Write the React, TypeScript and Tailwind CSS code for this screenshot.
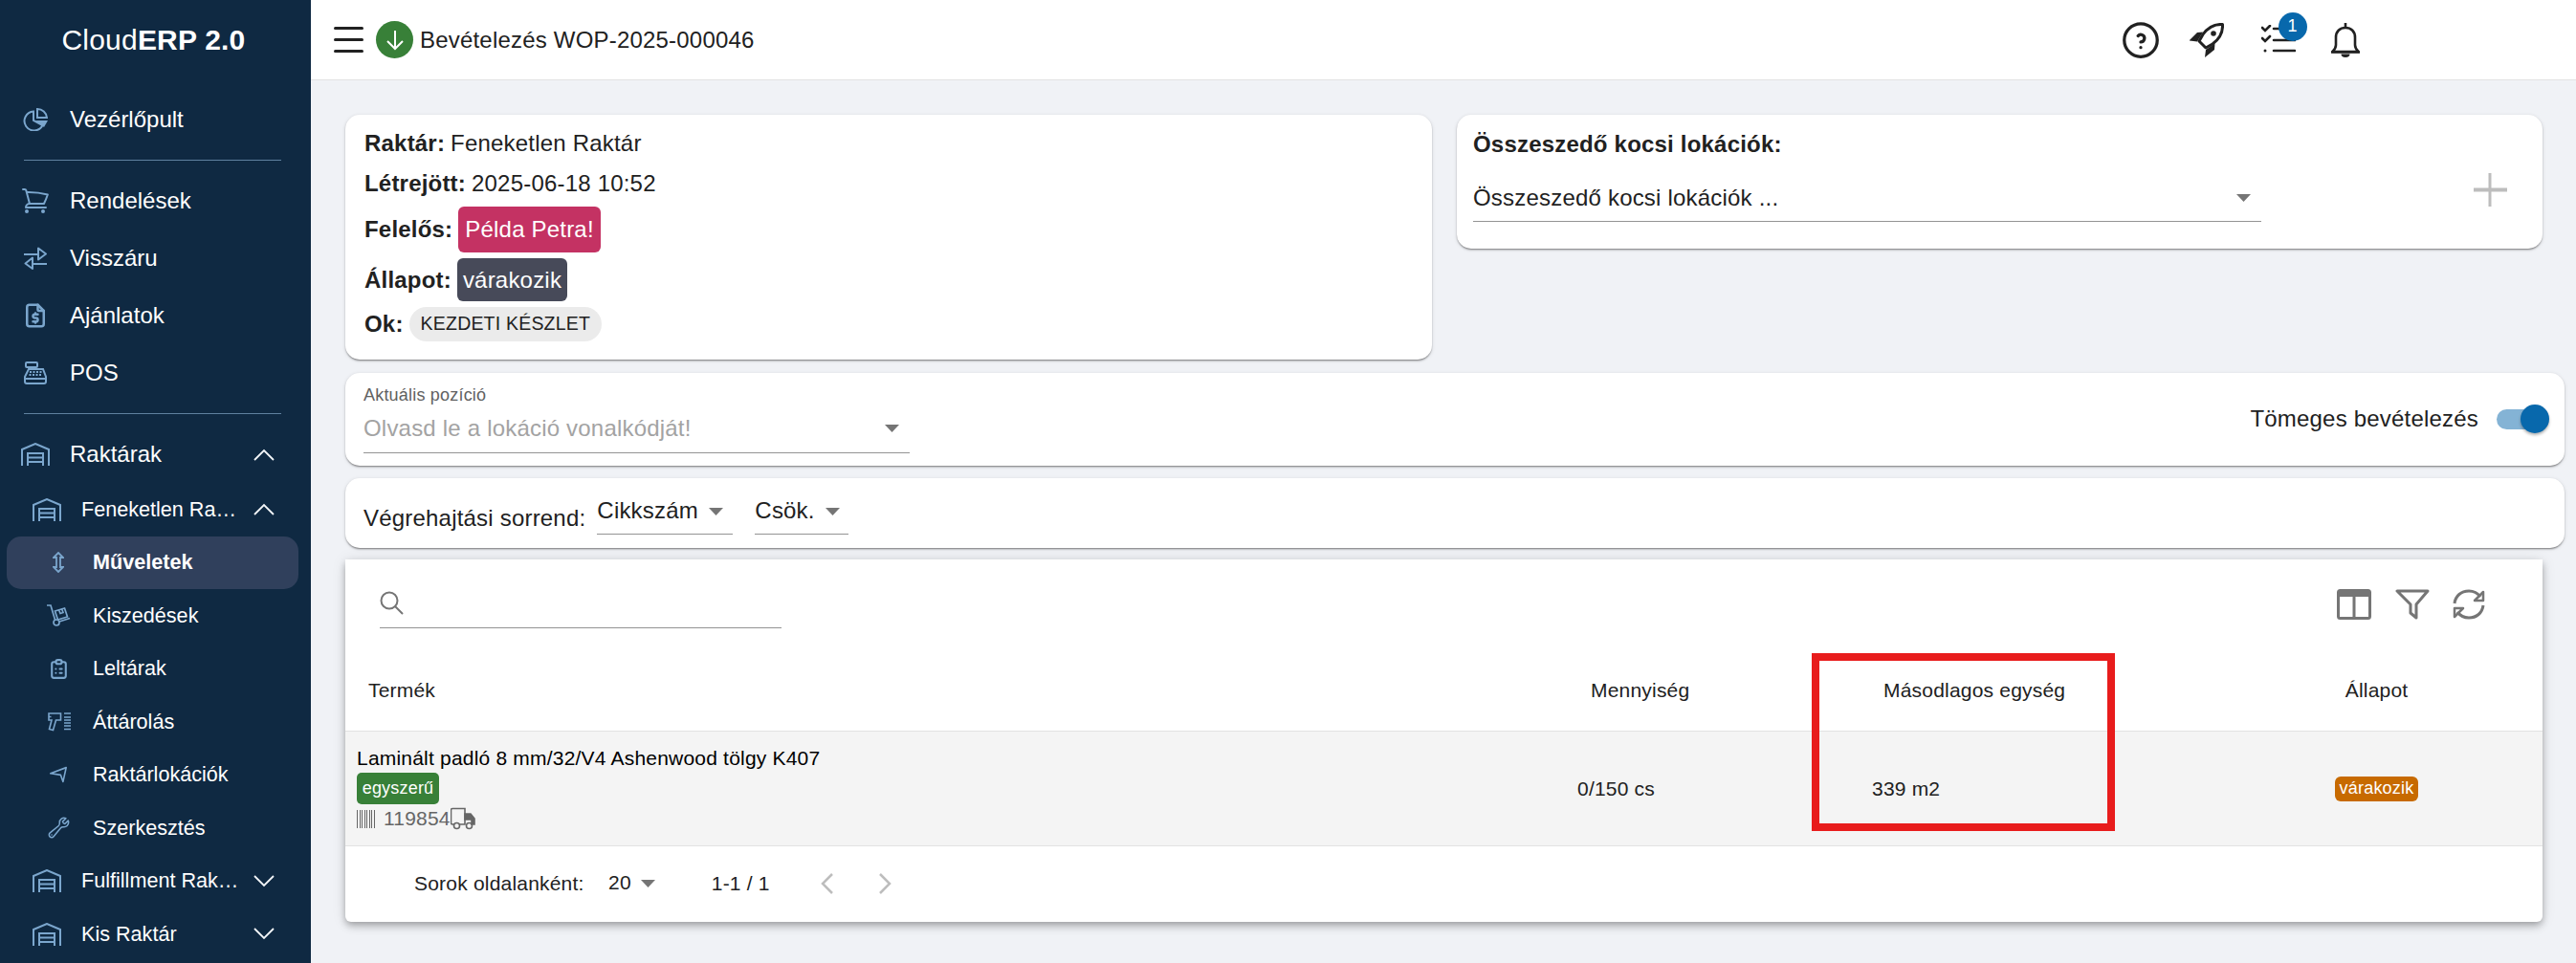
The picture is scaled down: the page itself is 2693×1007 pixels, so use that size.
import React from "react";
import { HiOutlineShoppingCart, HiOutlineWrench } from "react-icons/hi2";
import { TbClipboardList, TbFileDollar, TbHelpCircle } from "react-icons/tb";

const Warehouse = () => (
  <svg width="30" height="24" viewBox="0 0 30 24" fill="none" stroke="#7ba6cd" strokeWidth="2">
    <path d="M1 24V7L15 1l14 6v17" />
    <path d="M7 24V11h16v13M7 15.5h16M7 20h16" />
  </svg>
);
const Chevron = ({ up }: { up?: boolean }) => (
  <svg width="22" height="13" viewBox="0 0 22 13" fill="none" stroke="#f2f5f8" strokeWidth="1.8">
    <path d={up ? "M1 12L11 2l10 10" : "M1 1l10 10L21 1"} />
  </svg>
);
const Caret = ({ cls = "" }: { cls?: string }) => (
  <svg width="15" height="8" viewBox="0 0 15 8" className={cls}><path d="M0 0h15L7.5 8z" fill="#757575" /></svg>
);

const Top = ({ icon, label }: { icon: React.ReactNode; label: string }) => (
  <div className="flex h-[60px] items-center">
    <div className="flex w-[73px] justify-center text-[#7ba6cd]">{icon}</div>
    <span className="text-[24px] text-white">{label}</span>
  </div>
);
const WarehouseRow = ({ label, up }: { label: string; up?: boolean }) => (
  <div className="flex h-[55.5px] items-center">
    <div className="ml-[34px] w-[51px]"><Warehouse /></div>
    <span className="w-[166px] truncate text-[21.6px] text-white">{label}</span>
    <div className="ml-[14px]"><Chevron up={up} /></div>
  </div>
);
const Sub = ({ icon, label, active }: { icon: React.ReactNode; label: string; active?: boolean }) => (
  <div className="flex h-[55.5px] items-center py-[0.5px] pl-[7px] pr-[13px]">
    <div className={`flex h-full w-full items-center rounded-[15px] ${active ? "bg-[#30405c]" : ""}`}>
      <div className="flex w-[90px] justify-center pl-[18px] text-[#7ba6cd]">{icon}</div>
      <span className={`text-[21.6px] text-white ${active ? "font-bold" : ""}`}>{label}</span>
    </div>
  </div>
);

const Sidebar = () => (
  <aside className="h-[1007px] w-[325px] shrink-0 overflow-hidden bg-[#0f2942]">
    <div className="flex h-[83px] items-center justify-center pr-[4px] text-[30px] tracking-[0.2px] text-white">
      <span>Cloud</span><span className="font-bold">ERP 2.0</span>
    </div>
    <div className="mt-[12px]">
      <Top label="Vezérlőpult" icon={
        <svg width="26" height="24" viewBox="0 0 26 24" fill="none" stroke="#7ba6cd" strokeWidth="2">
          <path d="M11 3.500A10 10 0 1 0 20.500 18L11 13z" />
          <path d="M15 1v9h10a10 10 0 0 0-10-9z" />
          <path d="M13 13h13l-4 7z" fill="#7ba6cd" stroke="none" />
        </svg>
      } />
    </div>
    <div className="ml-[25px] mr-[31px] mt-[12px] h-px bg-[#5f819f]" />
    <div className="mt-[12px]">
      <Top icon={<HiOutlineShoppingCart size={32} />} label="Rendelések" />
      <Top label="Visszáru" icon={
        <svg width="24" height="24" viewBox="0 0 24 24" fill="none" stroke="#7ba6cd" strokeWidth="2" strokeLinejoin="round"><path d="M0 8h15M15 1.500v12L23 7.500zM24 18H9M9 11.500v11.500L1.500 17.500z" /></svg>
      } />
      <Top icon={<TbFileDollar size={30} />} label="Ajánlatok" />
      <Top label="POS" icon={
        <svg width="24" height="24" viewBox="0 0 24 24" fill="none" stroke="#7ba6cd" strokeWidth="2">
          <rect x="2" y="1" width="12" height="5" rx="1" />
          <path d="M5 8h15l3 8v5a2 2 0 0 1-2 2H3a2 2 0 0 1-2-2v-5z" />
          <path d="M1 18h22" />
          <path d="M6 11h13M5.500 14h14" strokeDasharray="2 1.500" strokeWidth="1.800" />
        </svg>
      } />
    </div>
    <div className="ml-[25px] mr-[31px] mt-[12px] h-px bg-[#5f819f]" />
    <div className="mt-[12px]">
      <div className="flex h-[60px] items-center">
        <div className="ml-[22px] w-[51px]"><Warehouse /></div>
        <span className="w-[192px] text-[24px] text-white">Raktárak</span>
        <Chevron up />
      </div>
      <WarehouseRow label="Feneketlen Raktár" up />
      <Sub active label="Műveletek" icon={
        <svg width="12" height="22" viewBox="0 0 12 22" fill="none" stroke="#7ba6cd" strokeWidth="1.8"><path d="M4 6H1l5-5 5 5H8v10h3l-5 5-5-5h3z" /></svg>
      } />
      <Sub label="Kiszedések" icon={
        <svg width="25" height="23" viewBox="0 0 25 23" fill="none" stroke="#7ba6cd" strokeWidth="1.700"><path d="M0 1h4l4.500 15" /><circle cx="10" cy="19" r="3" /><path d="M13 18l11-3.500" /><path d="M8.500 7l10-3 3 9-10 3zM12.500 5.500l1.500 4 3-1-1.500-4" /></svg>
      } />
      <Sub label="Leltárak" icon={<TbClipboardList size={25} />} />
      <Sub label="Áttárolás" icon={
        <svg width="25" height="20" viewBox="0 0 25 20" fill="none" stroke="#7ba6cd" strokeWidth="1.6"><path d="M2 1h12.500v7H9.500l-3 10.500-4-1L5 8H2zM1.500 4.500h3" /><path d="M18 1h7M18 5h7M18 8h7M18 11h7M18 14h7M18 17.500h7" strokeWidth="1.700" /></svg>
      } />
      <Sub label="Raktárlokációk" icon={
        <svg width="18" height="18" viewBox="0 0 22 20" fill="none" stroke="#7ba6cd" strokeWidth="2" strokeLinejoin="round"><path d="M1 8.500L21 1l-4 18-3-8.500z" /></svg>
      } />
      <Sub label="Szerkesztés" icon={<HiOutlineWrench size={25} />} />
      <WarehouseRow label="Fulfillment Raktár" />
      <WarehouseRow label="Kis Raktár" />
    </div>
  </aside>
);

const Header = () => (
  <header className="flex h-[84px] shrink-0 items-center border-b border-[#e2e2e2] bg-white pl-[24px]">
    <div className="flex w-[31px] flex-col gap-[9px]">
      <div className="h-[3px] rounded bg-[#212121]" /><div className="h-[3px] rounded bg-[#212121]" /><div className="h-[3px] rounded bg-[#212121]" />
    </div>
    <div className="ml-[13px] flex h-[39px] w-[39px] items-center justify-center rounded-full bg-[#388038]">
      <svg width="20" height="22" viewBox="0 0 20 22" fill="none" stroke="#fff" strokeWidth="2"><path d="M10 1v19M2 12l8 8 8-8" /></svg>
    </div>
    <span className="ml-[7px] text-[24px] text-[#212121]">Bevételezés WOP-2025-000046</span>
    <div className="ml-[1426px] flex items-center text-[#212121]">
      <TbHelpCircle size={46} strokeWidth={1.7} />
      <svg className="ml-[28px]" width="36" height="36" viewBox="0 0 36 36">
        <path d="M34.500 1.500C26 1 19 5 14 12l-4 7 7 7 7-4c7-5 11-12 10.500-20.500z" fill="#fff" stroke="#212121" strokeWidth="3" strokeLinejoin="round" />
        <circle cx="25" cy="11" r="2.800" fill="#212121" />
        <path d="M0 18l8-8 6-.5-6 10-8-1z" fill="#212121" />
        <path d="M16 36l10-8 .500-6.500L17 28z" fill="#212121" />
      </svg>
      <div className="relative ml-[39px]">
        <svg width="36" height="32" viewBox="0 0 36 32" fill="none" stroke="#212121" strokeWidth="2.600" strokeLinecap="round"><path d="M1 3l3 3 5-5M1 14l3 3 5-5M13 4h10M13 16h22M13 27h22" /><circle cx="4" cy="27" r="1.500" fill="#212121" stroke="none" /></svg>
        <div className="absolute -right-[12px] -top-[13px] flex h-[30px] w-[30px] items-center justify-center rounded-full bg-[#0868ac] text-[18px] text-white">1</div>
      </div>
      <svg className="ml-[36px]" width="32" height="36" viewBox="0 0 32 36" fill="none" stroke="#212121" strokeWidth="2.600">
        <path d="M16 0v4" />
        <path d="M2.500 30c2-2 3.500-4 3.500-7v-8c0-6 4-10 10-10s10 4 10 10v8c0 3 1.500 5 3.500 7z" strokeLinejoin="round" />
        <path d="M1 30.500h30" />
        <path d="M11.500 32.500h9a4.500 3.500 0 0 1-9 0z" fill="#212121" stroke="none" />
      </svg>
    </div>
  </header>
);

const card = "rounded-[15px] bg-white shadow-[0_2px_2px_-1px_rgba(0,0,0,0.35),0_1px_2px_0_rgba(0,0,0,0.14),0_1px_4px_0_rgba(0,0,0,0.12)]";

const InfoCard = () => (
  <div className={`${card} h-[256px] w-[1136px] pl-[20px] pt-[9px] text-[24px] text-[#212121]`}>
    <div className="flex h-[42px] items-center"><b>Raktár:</b><span className="ml-[6px]">Feneketlen Raktár</span></div>
    <div className="flex h-[42px] items-center"><b>Létrejött:</b><span className="ml-[6px]">2025-06-18 10:52</span></div>
    <div className="mt-[3px] flex h-[48px] items-center"><b>Felelős:</b><span className="ml-[6px] flex h-[48px] items-center rounded-[6px] bg-[#c43263] px-[7px] text-white">Példa Petra!</span></div>
    <div className="mt-[6px] flex h-[45px] items-center"><b>Állapot:</b><span className="ml-[6px] flex h-[45px] items-center rounded-[6px] bg-[#474a59] px-[6px] text-white">várakozik</span></div>
    <div className="mt-[6px] flex h-[36px] items-center"><b>Ok:</b><span className="ml-[6px] flex h-[36px] items-center rounded-full bg-[#ebebeb] px-[12px] text-[19.5px]">KEZDETI KÉSZLET</span></div>
  </div>
);

const CartCard = () => (
  <div className={`${card} ml-[26px] h-[140px] w-[1135px] pl-[17px] pt-[15px] text-[24px] text-[#212121]`}>
    <div className="font-bold leading-[32px]">Összeszedő kocsi lokációk:</div>
    <div className="mt-[15px] flex items-start">
      <div className="flex h-[50px] w-[824px] items-center justify-between border-b-[1.5px] border-[#949494]">
        <span>Összeszedő kocsi lokációk ...</span>
        <Caret cls="mr-[11px]" />
      </div>
      <svg className="ml-[222px] mt-[-1px]" width="35" height="35" viewBox="0 0 35 35" fill="#bdbdbd"><rect x="15.500" width="3" height="35" /><rect y="15.500" width="35" height="4" /></svg>
    </div>
  </div>
);

const Toggle = () => (
  <div className="flex items-center">
    <div className="h-[21px] w-[54px] rounded-full bg-[#84b3d5]" />
    <div className="-ml-[29px] h-[30px] w-[30px] rounded-full bg-[#0868ac] shadow-[0_2px_3px_rgba(0,0,0,0.3)]" />
  </div>
);

const PositionCard = () => (
  <div className={`${card} mt-[14px] flex h-[97px] items-start justify-between pl-[19px] pr-[16px]`}>
    <div>
      <div className="pt-[13px] text-[18px] leading-[20px] text-[#616161]">Aktuális pozíció</div>
      <div className="flex h-[51px] w-[571px] items-center justify-between border-b-[1.5px] border-[#949494] text-[24px] text-[#a3a3a3]">
        <span>Olvasd le a lokáció vonalkódját!</span>
        <Caret cls="mr-[11px]" />
      </div>
    </div>
    <div className="mt-[33px] flex items-center text-[24px] leading-[30px] text-[#212121]">
      <span>Tömeges bevételezés</span>
      <div className="ml-[19px]"><Toggle /></div>
    </div>
  </div>
);

const SortCard = () => (
  <div className={`${card} mt-[13px] flex h-[73px] items-start pl-[19px] text-[24px] text-[#212121]`}>
    <span className="mt-[28px] leading-[28px]">Végrehajtási sorrend:</span>
    <div className="ml-[12px] mt-[14px] flex h-[45px] w-[142px] items-start border-b-[1.5px] border-[#949494] pt-[6px] leading-[28px]">
      <span>Cikkszám</span><Caret cls="ml-[11px] mt-[11px]" />
    </div>
    <div className="ml-[23px] mt-[14px] flex h-[45px] w-[98px] items-start border-b-[1.5px] border-[#949494] pt-[6px] leading-[28px]">
      <span>Csök.</span><Caret cls="ml-[11px] mt-[11px]" />
    </div>
  </div>
);

const TableCard = () => (
  <div className="relative mt-[12px] h-[379px] w-[2297px] rounded-b-[6px] bg-white text-[21px] text-[#212121] shadow-[0_3px_7px_-1px_rgba(0,0,0,0.25),0_6px_9px_0_rgba(0,0,0,0.1),0_1px_15px_0_rgba(0,0,0,0.1)]">
    <div className="flex h-[107px] items-start justify-between pl-[36px] pr-[60px]">
      <div className="mt-[33px] flex h-[39px] w-[420px] items-start border-b-[1.5px] border-[#949494]">
        <svg width="25" height="25" viewBox="0 0 25 25" fill="none" stroke="#757575" strokeWidth="2"><circle cx="10" cy="10" r="8.500" /><path d="M16 16l8 8" /></svg>
      </div>
      <div className="mt-[31px] flex items-center">
        <svg width="36" height="32" viewBox="0 0 36 32"><rect x="1.500" y="1.500" width="33" height="29" rx="2" fill="none" stroke="#757575" strokeWidth="3" /><rect x="1" y="1" width="34" height="7" fill="#757575" /><rect x="16.500" y="6" width="3" height="24" fill="#757575" /></svg>
        <svg className="ml-[25px]" width="36" height="32" viewBox="0 0 36 32" fill="none" stroke="#757575" strokeWidth="3" strokeLinejoin="round"><path d="M2 2h32L22 16v14l-6-5v-9z" /></svg>
        <svg className="ml-[24px]" width="34" height="32" viewBox="0 0 34 32" fill="none" stroke="#757575" strokeWidth="3"><path d="M2 15C3 7 9 2 17 2c5 0 9 2 12 6M32 17c-1 8-7 13-15 13-5 0-9-2-12-6" /><path d="M32 3v9h-9zM2 29v-9h9z" strokeWidth="2.500" strokeLinejoin="round" /></svg>
      </div>
    </div>
    <div className="grid h-[73px] grid-cols-[1288px_308px_354px_347px] items-center border-b-[1.5px] border-[#e2e2e2] pb-[12px]">
      <span className="pl-[24px]">Termék</span>
      <span className="pl-[14px]">Mennyiség</span>
      <span className="pl-[12px]">Másodlagos egység</span>
      <span className="text-center">Állapot</span>
    </div>
    <div className="grid h-[120px] grid-cols-[1288px_308px_354px_347px] items-center border-b-[1.5px] border-[#e2e2e2] bg-[#f4f4f4]">
      <div className="flex flex-col pl-[12px]">
        <span className="pt-[1px] leading-[26px] text-black">Laminált padló 8 mm/32/V4 Ashenwood tölgy K407</span>
        <span className="mt-[2px] flex h-[33px] w-[86px] items-center justify-center rounded-[5px] bg-[#388038] text-[18px] text-white">egyszerű</span>
        <div className="mt-[1px] flex h-[28px] items-center text-[#666]">
          <svg width="21" height="19" viewBox="0 0 21 19" fill="#666"><path d="M0 0h1v19H0zM3 0h1v19H3zM5 0h1v19H5zM8 0h1v19H8zM10 0h1v19h-1zM13 0h1v19h-1zM15 0h1v19h-1zM18 0h1v19h-1z" /></svg>
          <span className="ml-[7px]">119854</span>
          <svg width="26" height="25" viewBox="0 0 26 25" fill="none" stroke="#666" strokeWidth="1.600"><path d="M4 18H2a1.500 1.500 0 0 1-1.500-1.500V3A1.500 1.500 0 0 1 2 1.500h13V18H9" /><path d="M15 7h6l4 5v6h-3v-5h-7z" fill="#666" /><circle cx="6.500" cy="19.500" r="3" /><circle cx="19.500" cy="19.500" r="3" /></svg>
        </div>
      </div>
      <span>0/150 cs</span>
      <span>339 m2</span>
      <div className="flex justify-center">
        <span className="flex h-[26px] items-center rounded-[6px] bg-[#c76a00] px-[5px] text-[18px] text-white">várakozik</span>
      </div>
    </div>
    <div className="flex h-[78px] items-center pl-[72px]">
      <span className="w-[203px]">Sorok oldalanként:</span>
      <span className="-mt-[2px]">20</span>
      <Caret cls="ml-[10px]" />
      <span className="ml-[59px]">1-1 / 1</span>
      <svg className="ml-[53px]" width="14" height="22" viewBox="0 0 14 22" fill="none" stroke="#bdbdbd" strokeWidth="2.500"><path d="M12 1L2 11l10 10" /></svg>
      <svg className="ml-[46px]" width="14" height="22" viewBox="0 0 14 22" fill="none" stroke="#bdbdbd" strokeWidth="2.500"><path d="M2 1l10 10L2 21" /></svg>
    </div>
    <div className="absolute left-[1533px] top-[98px] h-[186px] w-[317px] border-8 border-[#e81c1c]" />
  </div>
);

export default function App() {
  return (
    <div className="flex h-[1007px] w-[2693px] overflow-hidden bg-[#f0f2f6] font-['Liberation_Sans',Arial,sans-serif]">
      <Sidebar />
      <div className="flex min-w-0 flex-1 flex-col tracking-[0.2px]">
        <Header />
        <main className="pl-[36px] pr-[12px] pt-[36px]">
          <div className="flex items-start">
            <InfoCard />
            <CartCard />
          </div>
          <PositionCard />
          <SortCard />
          <TableCard />
        </main>
      </div>
    </div>
  );
}
